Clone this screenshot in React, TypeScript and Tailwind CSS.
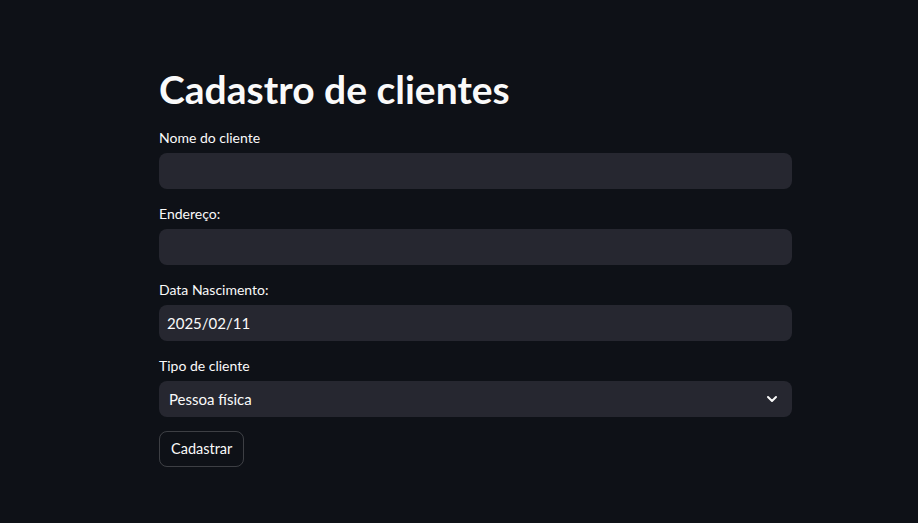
import { ChevronDown } from "lucide-react";

function Field({ label, children }: { label: string; children: React.ReactNode }) {
  return (
    <div className="flex flex-col">
      <label className="h-[18px] text-[14px] leading-[18px] text-[#fafafa] mb-[6px]">{label}</label>
      {children}
    </div>
  );
}

export default function App() {
  return (
    <div
      className="min-h-[523px] bg-[#0e1117] text-[#fafafa]"
      style={{ fontFamily: "Lato, 'Noto Sans', sans-serif" }}
    >
      <div className="w-[633px] ml-[159px] pt-[65px] flex flex-col gap-4">
        <h1 className="text-[39px] font-bold leading-[48px]">Cadastro de clientes</h1>
        <Field label="Nome do cliente">
          <input className="h-9 rounded-lg bg-[#262730] px-2 outline-none" />
        </Field>
        <Field label="Endereço:">
          <input className="h-9 rounded-lg bg-[#262730] px-2 outline-none" />
        </Field>
        <Field label="Data Nascimento:">
          <div className="h-9 rounded-lg bg-[#262730] px-2 flex items-center text-[15px]">2025/02/11</div>
        </Field>
        <Field label="Tipo de cliente">
          <div className="h-9 rounded-lg bg-[#262730] pl-[10px] pr-3 flex items-center justify-between text-[15px]">
            <span>Pessoa física</span>
            <ChevronDown size={16} strokeWidth={3} />
          </div>
        </Field>
        <div className="-mt-[2px]">
          <button className="h-9 px-[11px] rounded-lg border border-[#fafafa]/20 text-[14.5px]">Cadastrar</button>
        </div>
      </div>
    </div>
  );
}
